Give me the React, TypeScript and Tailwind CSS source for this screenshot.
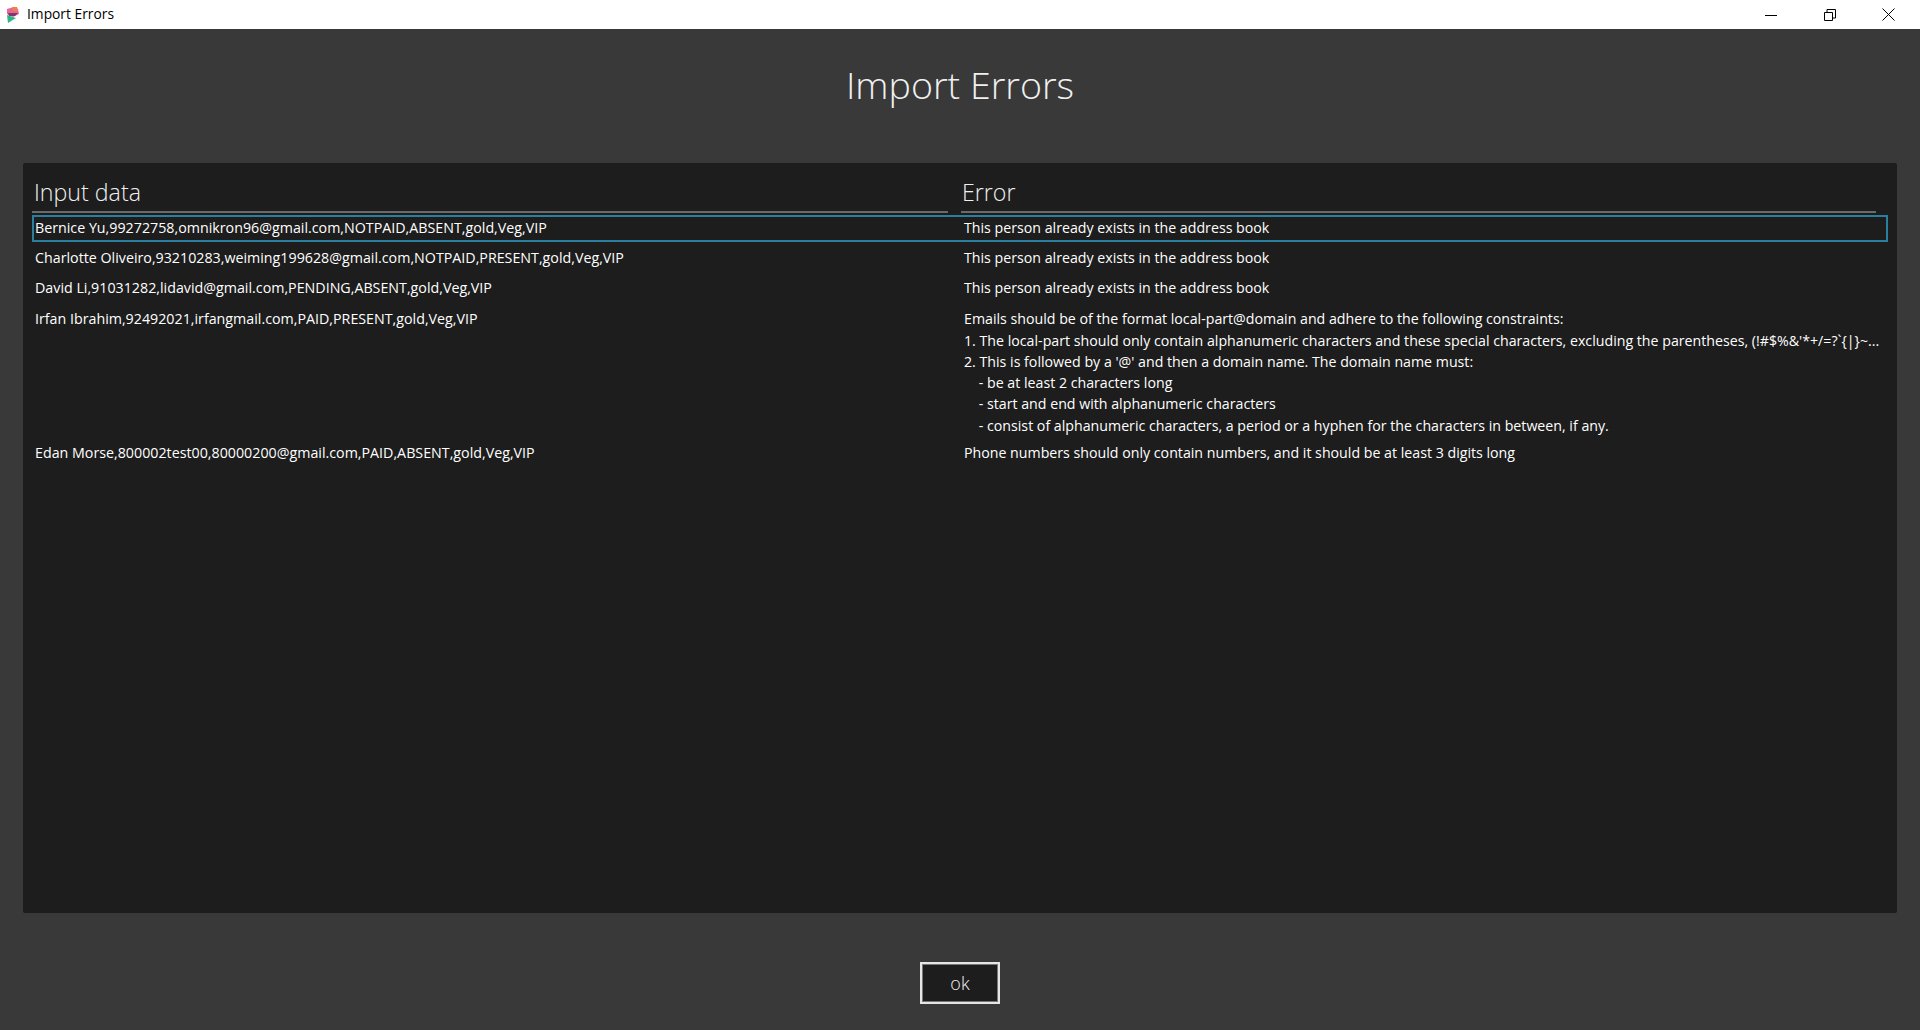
import React from 'react';

interface ErrorRow {
  input: string;
  error: string[];
}

const rows: ErrorRow[] = [
  {
    input: 'Bernice Yu,99272758,omnikron96@gmail.com,NOTPAID,ABSENT,gold,Veg,VIP',
    error: ['This person already exists in the address book'],
  },
  {
    input: 'Charlotte Oliveiro,93210283,weiming199628@gmail.com,NOTPAID,PRESENT,gold,Veg,VIP',
    error: ['This person already exists in the address book'],
  },
  {
    input: 'David Li,91031282,lidavid@gmail.com,PENDING,ABSENT,gold,Veg,VIP',
    error: ['This person already exists in the address book'],
  },
  {
    input: 'Irfan Ibrahim,92492021,irfangmail.com,PAID,PRESENT,gold,Veg,VIP',
    error: [
      'Emails should be of the format local-part@domain and adhere to the following constraints:',
      "1. The local-part should only contain alphanumeric characters and these special characters, excluding the parentheses, (!#$%&'*+/=?`{|}~...",
      "2. This is followed by a '@' and then a domain name. The domain name must:",
      '    - be at least 2 characters long',
      '    - start and end with alphanumeric characters',
      '    - consist of alphanumeric characters, a period or a hyphen for the characters in between, if any.',
    ],
  },
  {
    input: 'Edan Morse,800002test00,80000200@gmail.com,PAID,ABSENT,gold,Veg,VIP',
    error: ['Phone numbers should only contain numbers, and it should be at least 3 digits long'],
  },
];

const rowSpacing = ['', 'mt-[2.7px]', 'mt-[2.7px]', 'mt-[4px]', 'mt-0'];

const AppIcon = () => (
  <svg width="16" height="18" viewBox="0 0 16 18" className="blur-[0.4px]">
    <path d="M3 3 L10 1 L14 3 L15 8 L9 11 L3 8 Z" fill="#e8649a" />
    <path d="M8 1 L13 1 L14 5 L9 5 Z" fill="#ef7f45" />
    <path d="M4 7 L14 7 L11 10 L5 10 Z" fill="#7d3a68" />
    <path d="M3 9 L12 12 L4 17 Z" fill="#2fb58a" />
  </svg>
);

export default function App() {
  return (
    <div className="w-[1920px] h-[1030px] flex flex-col bg-[#393939] font-['Open_Sans','Noto_Sans',sans-serif] overflow-hidden">
      <div className="h-[29px] bg-white flex items-center shrink-0">
        <div className="w-[27px] pl-[4px] pt-[1px] flex items-center"><AppIcon /></div>
        <span className="text-[13.8px] text-black">Import Errors</span>
        <div className="ml-auto flex items-center h-full pr-[3px]">
          <div className="w-[58px] flex justify-center">
            <svg width="12" height="12" viewBox="0 0 12 12"><path d="M0 6.5H12" stroke="#000" /></svg>
          </div>
          <div className="w-[59px] flex justify-center">
            <svg width="12" height="12" viewBox="0 0 12 12" fill="none" stroke="#000">
              <path d="M0.5 3.5H8.5V11.5H0.5Z" />
              <path d="M3 3.5V0.5H11.5V9H8.5" />
            </svg>
          </div>
          <div className="w-[58px] flex justify-center">
            <svg width="13" height="13" viewBox="0 0 13 13" fill="none" stroke="#000"><path d="M0.5 0.5L12.5 12.5M12.5 0.5L0.5 12.5" /></svg>
          </div>
        </div>
      </div>

      <h1 className="h-[134px] shrink-0 flex items-center justify-center pb-[22px] text-[37.6px] font-light text-[#f0f0f0]">
        Import Errors
      </h1>

      <div className="mx-[23px] h-[750px] bg-[#1d1d1d] rounded-[2px] pl-[9px] pr-[9px] pt-[14px] shrink-0">
        <div className="flex">
          <div className="w-[916px] pl-[2px] h-[36px] border-b-2 border-[#6a6a6a] text-[23.2px] font-light leading-[30px] text-[#f0f0f0]">
            Input data
          </div>
          <div className="w-[915px] ml-[13px] pl-[1px] h-[36px] border-b-2 border-[#6a6a6a] text-[23.2px] font-light leading-[30px] text-[#f0f0f0]">
            Error
          </div>
        </div>
        <div className="mt-[2px] flex flex-col text-[14.25px] leading-[21.3px] text-white">
          {rows.map((row, i) => (
            <div
              key={i}
              className={`flex border-2 pb-[2px] ${rowSpacing[i]} ${i === 0 ? 'border-[#2a7f9e]' : 'border-transparent'}`}
            >
              <div className="w-[930px] shrink-0 pl-[1px] whitespace-nowrap">{row.input}</div>
              <div className="whitespace-pre text-[14.2px]">
                {row.error.map((line, j) => (
                  <div key={j}>{line}</div>
                ))}
              </div>
            </div>
          ))}
        </div>
      </div>

      <div className="flex-1 flex items-center justify-center pt-[23px]">
        <button className="w-[80px] h-[42px] bg-[#1d1d1d] border-2 border-[#e6e6e6] shadow-[inset_0_0_0_1px_#777] text-[18px] font-light text-[#f0f0f0]">ok</button>
      </div>
    </div>
  );
}
